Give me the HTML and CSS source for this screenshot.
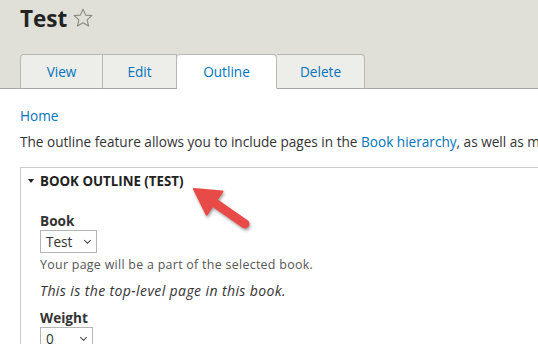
FILE: index.html
```html
<!DOCTYPE html>
<html lang="en">
<head>
  <meta charset="UTF-8">
  <title>Test | Outline</title>
  <link rel="stylesheet" href="styles.css">
</head>
<body>
  <div class="page">
    <header class="page-head">
      <h1 class="page-title">Test
        <svg class="star" width="20" height="20" viewBox="0 0 20 20">
          <path d="M10 1.2 L12.6 7.1 L18.9 7.6 L14.1 11.8 L15.6 18 L10 14.7 L4.4 18 L5.9 11.8 L1.1 7.6 L7.4 7.1 Z" fill="none" stroke="#8a8a82" stroke-width="1.1" stroke-linejoin="round"/>
        </svg>
      </h1>
      <ul class="tabs">
        <li><a href="#">View</a></li>
        <li><a href="#">Edit</a></li>
        <li class="active"><a href="#">Outline</a></li>
        <li><a href="#">Delete</a></li>
      </ul>
    </header>

    <main class="content">
      <nav class="breadcrumb"><a href="#">Home</a></nav>
      <p class="intro">The outline feature allows you to include pages in the <a href="#">Book hierarchy</a>, as well as move them within the hierarchy or to reorder groups of pages.</p>

      <div class="outline-box">
        <div class="outline-title"><span class="caret"></span>BOOK OUTLINE (TEST)</div>
        <div class="outline-body">
          <div class="form-item">
            <label>Book</label>
            <div class="select select-book">Test <span class="chev"></span></div>
            <div class="description">Your page will be a part of the selected book.</div>
          </div>
          <p class="note">This is the top-level page in this book.</p>
          <div class="form-item">
            <label>Weight</label>
            <div class="select select-weight">0 <span class="chev"></span></div>
          </div>
        </div>
      </div>
    </main>

    <!-- annotation arrow drawn over the screenshot -->
    <svg class="pointer" width="538" height="344" viewBox="0 0 538 344">
      <line x1="212" y1="201" x2="245" y2="224" stroke="#e84b47" stroke-width="9" stroke-linecap="round"/>
      <polygon points="194,189 222.5,191.5 206.7,214.7" fill="#e84b47" stroke="#e84b47" stroke-width="2" stroke-linejoin="round"/>
    </svg>
  </div>
</body>
</html>
```

FILE: styles.css
```css
body {
  margin: 0;
  font-family: "Open Sans", "DejaVu Sans", sans-serif;
  font-size: 13.6px;
  color: #333;
  background: #fff;
  overflow: hidden;
}

a {
  color: #0074bd;
  text-decoration: none;
}

.page {
  position: relative;
  width: 900px;
}

.page-head {
  background-color: #e0e0d8;
  padding: 0 20px;
  border-bottom: 1px solid #a6a6a6;
  height: 88px;
  display: flex;
  flex-direction: column;
  justify-content: space-between;
}

.page-title {
  margin: 0;
  padding-top: 1px;
  font-size: 22.5px;
  font-weight: bold;
  color: #232323;
  display: flex;
  align-items: center;
  gap: 6px;
  height: 34px;
}

.star {
  margin-top: -1px;
}

.tabs {
  list-style: none;
  margin: 0 0 -1px;
  padding: 0;
  display: flex;
}

.tabs li {
  background-color: #ededea;
  border: 1px solid #b8b8b2;
  border-left: none;
  border-bottom-color: #a6a6a6;
  height: 33px;
}

.tabs li:first-child {
  border-left: 1px solid #b8b8b2;
  border-top-left-radius: 4px;
}

.tabs li:last-child {
  border-top-right-radius: 4px;
}

.tabs li.active {
  background-color: #fff;
  border-bottom-color: #fff;
  border-top-left-radius: 4px;
  border-top-right-radius: 4px;
}

.tabs a {
  display: flex;
  align-items: center;
  justify-content: center;
  height: 33px;
  font-size: 13.6px;
}

.tabs li:nth-child(1) a { width: 81px; }
.tabs li:nth-child(2) a { width: 73px; }
.tabs li:nth-child(3) a { width: 99px; }
.tabs li:nth-child(4) a { width: 87px; }

.content {
  padding: 0 20px;
}

.breadcrumb {
  margin-top: 18px;
  line-height: 18px;
}

.intro {
  margin: 8px 0 0;
  line-height: 18px;
  white-space: nowrap;
}

.outline-box {
  margin-top: 16px;
  border: 1px solid #ccc;
  border-right: none;
}

.outline-title {
  display: flex;
  align-items: center;
  padding: 0 0 0 7px;
  height: 26px;
  font-weight: bold;
  font-size: 13.3px;
  color: #222;
}

.caret {
  width: 0;
  height: 0;
  border-left: 3.5px solid transparent;
  border-right: 3.5px solid transparent;
  border-top: 4px solid #222;
  margin-right: 6px;
}

.outline-body {
  padding: 18px 19px 0;
}

.form-item label {
  display: block;
  font-weight: bold;
  line-height: 18px;
}

.select {
  display: inline-flex;
  align-items: center;
  justify-content: space-between;
  box-sizing: border-box;
  height: 23px;
  border: 1px solid #b5b5b5;
  padding: 0 6px 0 5px;
  margin-top: 0;
  font-size: 13.6px;
}

.select-book { width: 57px; }
.select-weight { width: 53px; }

.chev {
  width: 4px;
  height: 4px;
  border-right: 1.5px solid #444;
  border-bottom: 1.5px solid #444;
  transform: rotate(45deg);
  margin-top: -3px;
}

.description {
  font-size: 12.4px;
  color: #555;
  margin-top: 4px;
  line-height: 16px;
  letter-spacing: 0.3px;
}

.note {
  font-style: italic;
  font-size: 14px;
  letter-spacing: 0.4px;
  margin: 9px 0 9px;
  line-height: 18px;
}

.pointer {
  position: absolute;
  left: 0;
  top: 0;
  filter: drop-shadow(1px 2px 1.5px rgba(0, 0, 0, 0.35));
}
```
